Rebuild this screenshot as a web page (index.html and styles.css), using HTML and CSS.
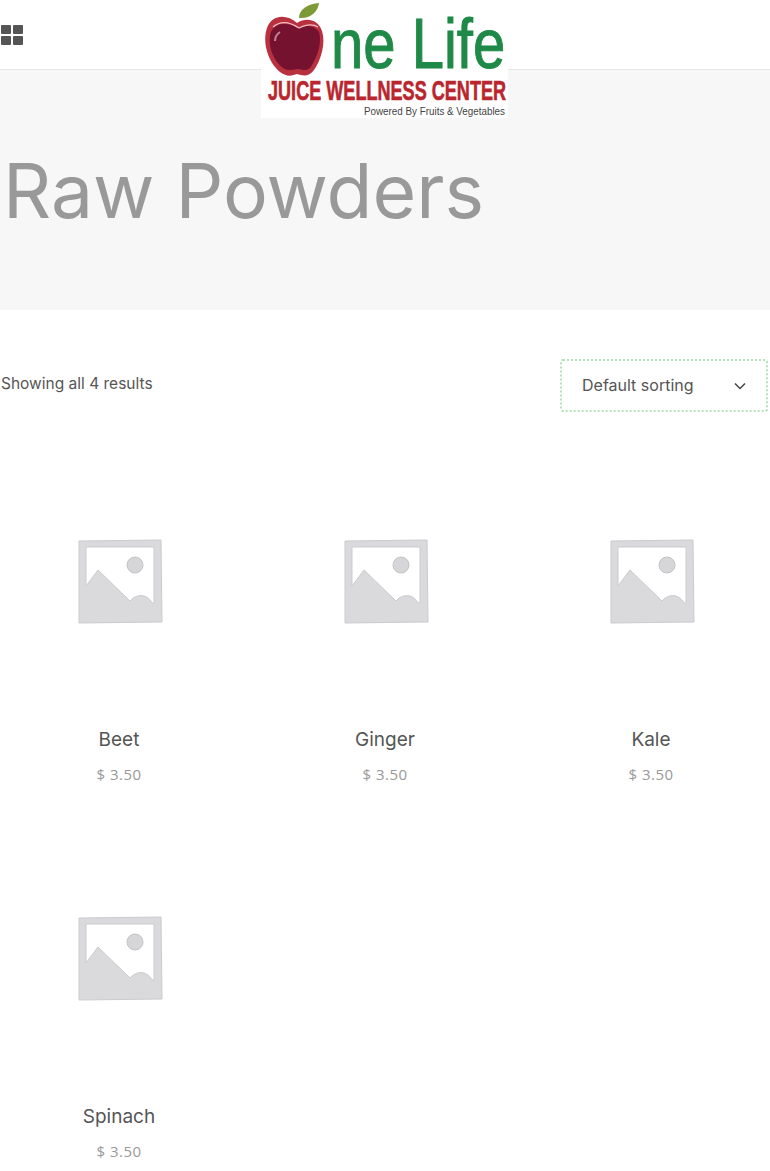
FILE: index.html
```html
<!DOCTYPE html>
<html lang="en">
<head>
    <meta charset="UTF-8">
    <meta name="viewport" content="width=device-width, initial-scale=1.0">
    <title>Raw Powders</title>
    <link rel="stylesheet" href="styles.css">
</head>
<body>

<svg class="svg-defs" width="0" height="0">
    <symbol id="placeholder" viewBox="0 0 238 238">
        <path fill="#dadadc" stroke="#cbcbcf" stroke-width="1" fill-rule="evenodd" d="M79 79 L161 78 L162 160 L79 161 Z M86 85 L86 124 L98 108 L130 139 C135 133 146 130 152 141 L154 141 L154 85 Z"/>
        <circle cx="135" cy="103" r="8" fill="#d6d6d8" stroke="#c4c4c8" stroke-width="1"/>
    </symbol>
</svg>

<header class="site-header">
    <a href="#" class="menu-toggle" aria-label="Menu">
        <span></span><span></span><span></span><span></span>
    </a>
    <a href="#" class="logo">
        <svg width="247" height="118" viewBox="0 0 247 118">
            <rect width="247" height="118" fill="#fff"/>
            <path fill="#7c9a35" d="M38 18 C38 9 47 4 58 3 C57 12 49 19 38 18 Z"/>
            <path fill="#b9303f" d="M36 23 C26 14 11 14 6 28 C1 42 7 62 19 72 C27 78 32 75 36 74 C42 76 48 77 53 70 C60 60 65 43 61 31 C57 19 45 17 36 23 Z"/>
            <path fill="#741230" d="M36 28 C28 22 14 22 10 32 C6 45 12 60 22 68 C29 72 33 69 37 69 C43 70 47 72 51 65 C57 55 61 42 58 32 C53 25 44 25 36 28 Z"/>
            <path fill="none" stroke="#efc0c4" stroke-width="1.2" d="M12 27 C20 20 29 22 38 28 C44 25 51 23 57 27"/>
            <path fill="none" stroke="#c98090" stroke-width="2" d="M14 41 C14 37 16 34 19 32"/>
            <text class="logo-name" transform="translate(70 68) scale(.829 1)">ne Life</text>
            <text class="logo-tag" transform="translate(7 100) scale(.67 1)">JUICE WELLNESS CENTER</text>
            <text class="logo-small" x="103" y="115" textLength="141" lengthAdjust="spacingAndGlyphs">Powered By Fruits &amp; Vegetables</text>
        </svg>
    </a>
</header>

<section class="page-title">
    <h1>Raw Powders</h1>
</section>

<main class="shop">
    <div class="shop-toolbar">
        <p class="result-count">Showing all 4 results</p>
        <div class="orderby">
            <span>Default sorting</span>
            <svg width="12" height="8" viewBox="0 0 12 8"><path d="M1 1.5 L6 6.5 L11 1.5" fill="none" stroke="#444" stroke-width="1.5"/></svg>
        </div>
    </div>

    <ul class="products">
        <li class="product">
            <svg class="product-img"><use href="#placeholder"/></svg>
            <h2>Beet</h2>
            <span class="price">$ 3.50</span>
        </li>
        <li class="product">
            <svg class="product-img"><use href="#placeholder"/></svg>
            <h2>Ginger</h2>
            <span class="price">$ 3.50</span>
        </li>
        <li class="product">
            <svg class="product-img"><use href="#placeholder"/></svg>
            <h2>Kale</h2>
            <span class="price">$ 3.50</span>
        </li>
        <li class="product">
            <svg class="product-img"><use href="#placeholder"/></svg>
            <h2>Spinach</h2>
            <span class="price">$ 3.50</span>
        </li>
    </ul>
</main>

</body>
</html>
```

FILE: styles.css
```css
html, body {
    height: 1171px;
    overflow: hidden;
}
body {
    font-family: 'Inter', sans-serif;
    background-color: #fff;
    color: #555;
    margin: 0;
    padding: 0;
}
.svg-defs {
    display: block;
    height: 0;
}
.site-header {
    height: 69px;
    border-bottom: 1px solid #e6e6e6;
    display: flex;
    align-items: center;
    position: relative;
    background: #fff;
}
.menu-toggle {
    display: grid;
    grid-template-columns: 10px 10px;
    grid-auto-rows: 9px;
    gap: 2px;
    margin-left: 1px;
}
.menu-toggle span {
    background: #555;
    border-radius: 1px;
}
.logo {
    position: absolute;
    left: 261px;
    top: 0;
    display: block;
}
.logo svg {
    display: block;
}
.logo-name {
    font-family: 'Liberation Sans', sans-serif;
    font-size: 70px;
    fill: #1f8a47;
    stroke: #1f8a47;
    stroke-width: 1px;
}
.logo-tag {
    font-family: 'Liberation Sans', sans-serif;
    font-size: 27px;
    font-weight: bold;
    fill: #b9262e;
    stroke: #b9262e;
    stroke-width: 0.6px;
}
.logo-small {
    font-family: 'Liberation Sans', sans-serif;
    font-size: 10px;
    fill: #444;
}
.page-title {
    background: #f7f7f7;
    height: 240px;
    display: flex;
    align-items: center;
}
.page-title h1 {
    font-size: 75px;
    font-weight: 400;
    color: #999;
    margin: 0 0 0 3px;
}
.shop-toolbar {
    display: flex;
    justify-content: space-between;
    align-items: center;
    padding: 49px 2px 0 1px;
}
.result-count {
    margin: 0 0 5px 0;
    font-size: 15.5px;
    color: #555;
}
.orderby {
    width: 208px;
    height: 53px;
    box-sizing: border-box;
    border: 2px dotted #b5e3b7;
    border-radius: 3px;
    padding: 0 20px 2px 20px;
    display: flex;
    justify-content: space-between;
    align-items: center;
    font-size: 16px;
    color: #555;
}
.orderby svg {
    margin-top: 2px;
}
.products {
    list-style: none;
    margin: 50px 0 0 0;
    padding: 0;
    display: grid;
    grid-template-columns: repeat(3, 238px);
    column-gap: 28px;
}
.product {
    height: 377px;
    text-align: center;
}
.product-img {
    display: block;
    width: 238px;
    height: 238px;
}
.product h2 {
    font-size: 19px;
    font-weight: 400;
    color: #555;
    line-height: 26px;
    margin: 27px 0 11px 0;
}
.price {
    font-family: 'Open Sans', sans-serif;
    font-size: 15px;
    letter-spacing: 0.5px;
    color: #999;
    line-height: 20px;
    display: block;
}
```
